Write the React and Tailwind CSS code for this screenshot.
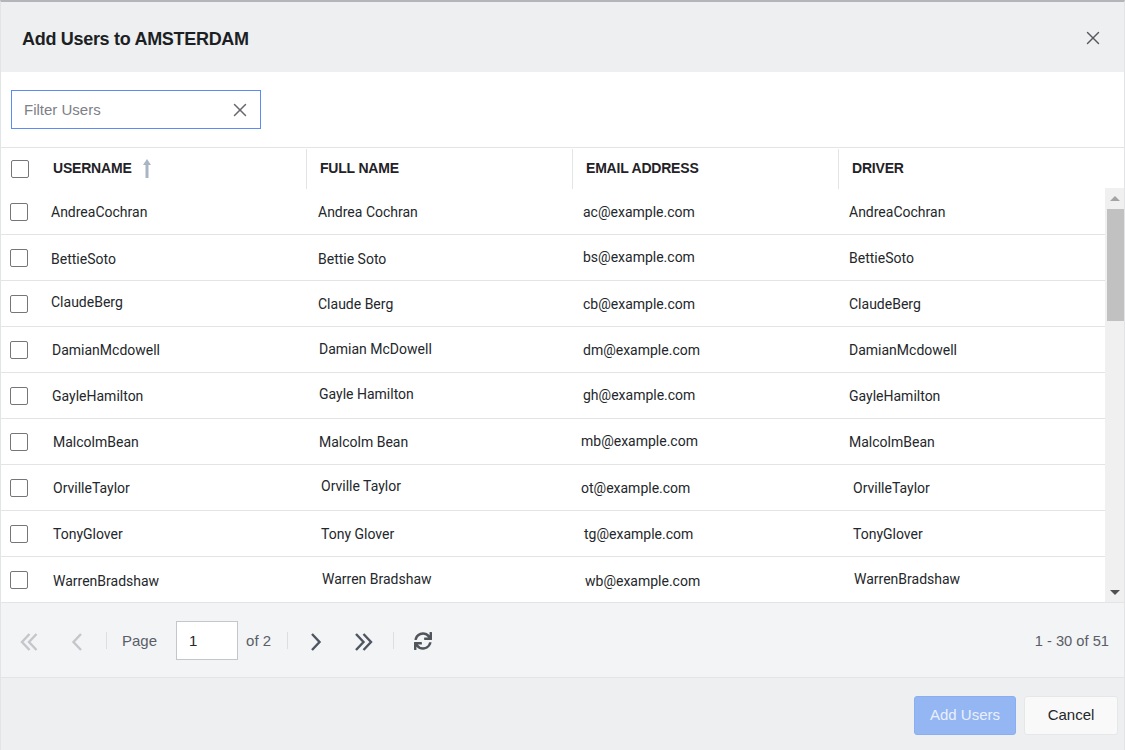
import { X } from 'lucide-react';
import { FaSync } from 'react-icons/fa';

// cell text is not quite aligned in the source, so each cell keeps its own nudge
const users = [
    { u: ['AndreaCochran', 'pl-[50px]', ''], f: ['Andrea Cochran', 'pl-[51px]', ''], e: ['ac@example.com', 'pl-[50px]', ''], d: ['AndreaCochran', 'pl-[50px]', ''] },
    { u: ['BettieSoto', 'pl-[50px]', 'mt-[2px]'], f: ['Bettie Soto', 'pl-[51px]', 'mt-[1px]'], e: ['bs@example.com', 'pl-[50px]', 'mb-[2px]'], d: ['BettieSoto', 'pl-[50px]', ''] },
    { u: ['ClaudeBerg', 'pl-[50px]', 'mb-[4px]'], f: ['Claude Berg', 'pl-[51px]', ''], e: ['cb@example.com', 'pl-[50px]', ''], d: ['ClaudeBerg', 'pl-[50px]', ''] },
    { u: ['DamianMcdowell', 'pl-[51px]', ''], f: ['Damian McDowell', 'pl-[52px]', 'mb-[2px]'], e: ['dm@example.com', 'pl-[50px]', ''], d: ['DamianMcdowell', 'pl-[50px]', ''] },
    { u: ['GayleHamilton', 'pl-[51px]', ''], f: ['Gayle Hamilton', 'pl-[52px]', 'mb-[4px]'], e: ['gh@example.com', 'pl-[50px]', 'mb-[2px]'], d: ['GayleHamilton', 'pl-[50px]', ''] },
    { u: ['MalcolmBean', 'pl-[52px]', ''], f: ['Malcolm Bean', 'pl-[52px]', ''], e: ['mb@example.com', 'pl-[48px]', 'mb-[2px]'], d: ['MalcolmBean', 'pl-[50px]', ''] },
    { u: ['OrvilleTaylor', 'pl-[52px]', ''], f: ['Orville Taylor', 'pl-[54px]', 'mb-[4px]'], e: ['ot@example.com', 'pl-[48px]', ''], d: ['OrvilleTaylor', 'pl-[54px]', ''] },
    { u: ['TonyGlover', 'pl-[52px]', ''], f: ['Tony Glover', 'pl-[54px]', ''], e: ['tg@example.com', 'pl-[51px]', ''], d: ['TonyGlover', 'pl-[54px]', ''] },
    { u: ['WarrenBradshaw', 'pl-[52px]', ''], f: ['Warren Bradshaw', 'pl-[55px]', 'mb-[4px]'], e: ['wb@example.com', 'pl-[52px]', ''], d: ['WarrenBradshaw', 'pl-[55px]', 'mb-[4px]'] },
];

const columns = ['USERNAME', 'FULL NAME', 'EMAIL ADDRESS', 'DRIVER'];

const Checkbox = ({ className }) => (
    <div className={`w-[18px] h-[18px] shrink-0 bg-white border border-[#75757a] rounded-[2px] ${className}`} />
);

const Cell = ({ data, width }) => (
    <div className={`${width} ${data[1]} flex items-center h-full pt-[2px]`}>
        <span className={data[2]}>{data[0]}</span>
    </div>
);

const Chevron = ({ double, left, className }) => (
    <svg width="20" height="20" viewBox="0 0 20 20" fill="none" stroke="currentColor" strokeWidth="2.4" className={className}>
        {double ? (
            <path d={left ? 'M9.5 2 2 10l7.5 8M16.5 2 9 10l7.5 8' : 'M3 2 10.5 10 3 18M10.5 2 18 10l-7.5 8'} />
        ) : (
            <path d={left ? 'M14 2 6.5 10l7.5 8' : 'M6 2 13.5 10 6 18'} />
        )}
    </svg>
);

const App = () => {
    return (
        <div className="w-[1125px] h-[750px] overflow-hidden flex flex-col bg-white border-t-2 border-t-[#b4b5b8] border-x border-x-[#e3e4e6] font-['Liberation_Sans',sans-serif] text-[#1f2226]">
            {/* Header */}
            <div className="h-[70px] shrink-0 bg-[#eeeff1] flex items-center justify-between pl-[21px] pr-[20px]">
                <h1 className="text-[18px] tracking-[-0.3px] font-bold text-[#1c1f24] mt-[5px]">Add Users to AMSTERDAM</h1>
                <X size={22} strokeWidth={1.5} className="text-[#55585c] mt-[1px]" />
            </div>

            {/* Filter */}
            <div className="h-[76px] shrink-0 border-b border-[#e3e4e6] pt-[18px] pl-[10px]">
                <div className="w-[250px] h-[39px] border border-[#5c8cf0] flex items-center justify-between pl-[12px] pr-[9px]">
                    <span className="text-[15px] text-[#7d8087] mt-[2px]">Filter Users</span>
                    <X size={22} strokeWidth={1.6} className="text-[#65686d]" />
                </div>
            </div>

            {/* Column headers */}
            <div className="h-[41px] shrink-0 flex items-center">
                <div className="w-[306px] h-[40px] flex items-center border-r border-[#e3e4e6]">
                    <Checkbox className="ml-[10px]" />
                    <span className="ml-[24px] text-[14px] tracking-[-0.2px] font-bold">{columns[0]}</span>
                    <svg width="12" height="19" viewBox="0 0 12 19" fill="#a9b5c3" className="ml-[9px] -mt-[1px]">
                        <path d="M6 0 10 6H7.5V19H4.5V6H2z" />
                    </svg>
                </div>
                <div className="w-[266px] h-[40px] flex items-center border-r border-[#e3e4e6] pl-[13px] text-[14px] tracking-[-0.2px] font-bold">{columns[1]}</div>
                <div className="w-[266px] h-[40px] flex items-center border-r border-[#e3e4e6] pl-[13px] text-[14px] tracking-[-0.2px] font-bold">{columns[2]}</div>
                <div className="flex-1 h-[40px] flex items-center pl-[13px] text-[14px] tracking-[-0.2px] font-bold">{columns[3]}</div>
            </div>

            {/* Rows */}
            <div className="h-[414px] shrink-0 flex border-b border-[#e3e4e6]">
                <div className="flex-1 font-['Roboto',sans-serif] text-[14px] text-[#24272b]">
                    {users.map((user) => (
                        <div key={user.u[0]} className="relative h-[46px] flex items-center border-b border-[#e3e4e6] last:border-b-0">
                            <Checkbox className="absolute left-[9px] top-[14px]" />
                            <Cell data={user.u} width="w-[266px]" />
                            <Cell data={user.f} width="w-[266px]" />
                            <Cell data={user.e} width="w-[266px]" />
                            <Cell data={user.d} width="flex-1" />
                        </div>
                    ))}
                </div>
                <div className="w-[19px] shrink-0 bg-[#f0f0f0] flex flex-col items-center -mt-[1px]">
                    <div className="h-[21px] shrink-0 flex items-center justify-center">
                        <div className="w-0 h-0 border-x-[5px] border-x-transparent border-b-[5px] border-b-[#a3a3a3]" />
                    </div>
                    <div className="w-[17px] ml-[2px] h-[112px] shrink-0 bg-[#c1c1c1]" />
                    <div className="flex-1" />
                    <div className="h-[20px] shrink-0 flex items-center justify-center">
                        <div className="w-0 h-0 border-x-[5px] border-x-transparent border-t-[5px] border-t-[#505050]" />
                    </div>
                </div>
            </div>

            {/* Pagination */}
            <div className="h-[75px] shrink-0 bg-[#f3f4f6] border-b border-[#e3e4e6] flex items-center pl-[19px] pr-[15px] text-[15px] text-[#5a5e66]">
                <Chevron double left className="mt-[3px] text-[#c4c6ca]" />
                <Chevron left className="mt-[3px] ml-[27px] text-[#c4c6ca]" />
                <div className="ml-[19px] w-px h-[17px] bg-[#dcdee1]" />
                <span className="ml-[15px] mt-[2px]">Page</span>
                <div className="ml-[19px] w-[62px] h-[39px] bg-white border border-[#c3c6cd] flex items-center pl-[12px] pt-[2px] text-[#24272b]">1</div>
                <span className="ml-[8px] mt-[2px]">of 2</span>
                <div className="ml-[16px] w-px h-[17px] bg-[#dcdee1]" />
                <Chevron className="mt-[3px] ml-[18px] text-[#4e5560]" />
                <Chevron double className="mt-[3px] ml-[27px] text-[#4e5560]" />
                <div className="ml-[20px] w-px h-[17px] bg-[#dcdee1]" />
                <FaSync size={18} className="ml-[20px] mt-[1px] text-[#50545b]" />
                <span className="ml-auto mt-[2px] text-[14.7px] text-[#5a5e66]">1 - 30 of 51</span>
            </div>

            {/* Footer */}
            <div className="flex-1 bg-[#eeeff1] flex items-start justify-end gap-[8px] pt-[18px] pr-[6px]">
                <button className="w-[102px] h-[39px] rounded-[3px] bg-[#94b6f3] border border-[#8aaff0] text-[15px] text-[#eaf0fd]">Add Users</button>
                <button className="w-[94px] h-[39px] rounded-[3px] bg-[#f9f9f9] border border-[#e6e7e9] text-[15px] text-[#24272b]">Cancel</button>
            </div>
        </div>
    );
};

export default App;
